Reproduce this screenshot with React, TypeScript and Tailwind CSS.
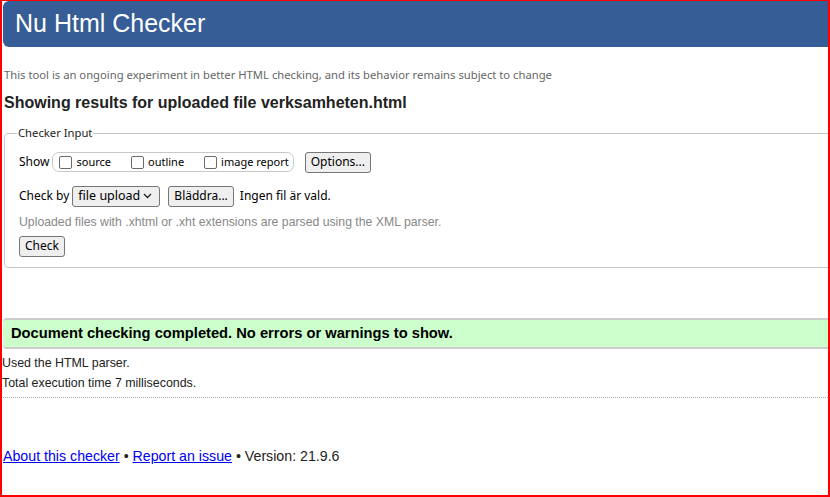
import React from 'react';

const seg = { fontFamily: '"Noto Sans", "Open Sans", sans-serif' };

function Box() {
  return <span className="inline-block h-[13px] w-[13px] rounded-[2px] border border-[#6b6b6b] bg-white" />;
}

function Btn({ children }: { children: React.ReactNode }) {
  return (
    <span className="inline-flex h-[21px] items-center rounded-[3px] border border-[#767676] bg-[#efefef] px-[5px] text-[12px] text-black">
      {children}
    </span>
  );
}

export default function App() {
  return (
    <div
      className="h-[497px] w-[830px] overflow-hidden border-b-2 border-l-2 border-r-2 border-t border-[#ff0000] bg-white text-black"
      style={{ fontFamily: '"Liberation Sans", Arial, sans-serif' }}
    >
      {/* header */}
      <div className="ml-px flex h-[46px] items-center rounded-l-[6px] bg-[#365d95] pl-[12px] text-[25px] text-white">
        Nu Html Checker
      </div>

      <p className="mt-[20px] pl-[2px] text-[11.25px] leading-[16px] text-[#666]" style={seg}>
        This tool is an ongoing experiment in better HTML checking, and its behavior remains subject to change
      </p>

      <h2 className="mt-[10px] pl-[2px] text-[16px] font-bold leading-[20px] text-[#222]">
        Showing results for uploaded file verksamheten.html
      </h2>

      {/* fieldset */}
      <fieldset className="mr-[-10px] ml-[2px] mt-[12px] rounded-[4px] border border-[#c8c8c8] px-[14px] pb-[10px]">
        <legend className="ml-[-2px] px-[1px] text-[11.25px] text-[#222]" style={seg}>
          Checker Input
        </legend>

        <div className="mt-[10px] flex items-center text-[12px]" style={seg}>
          <span>Show</span>
          <span className="ml-[3px] flex h-[20px] items-center rounded-[7px] border border-[#c8c8c8] pl-[6px] pr-[4px] text-[11px]">
            <Box />
            <span className="ml-[4px]">source</span>
            <span className="ml-[20px] flex"><Box /></span>
            <span className="ml-[4px]">outline</span>
            <span className="ml-[20px] flex"><Box /></span>
            <span className="ml-[4px]">image report</span>
          </span>
          <span className="ml-[11px] flex">
            <Btn>Options...</Btn>
          </span>
        </div>

        <div className="mt-[13px] flex items-center text-[12px]" style={seg}>
          <span>Check by</span>
          <span className="ml-[3px] inline-flex h-[21px] w-[88px] items-center justify-between rounded-[3px] border border-[#767676] bg-[#efefef] pl-[5px] pr-[7px] text-[12.5px]">
            <span>file upload</span>
            <svg width="9" height="6" viewBox="0 0 9 6" fill="none">
              <path d="M1 1l3.5 3.5L8 1" stroke="#222" strokeWidth="1.3" />
            </svg>
          </span>
          <span className="ml-[8px] flex">
            <Btn>Bläddra...</Btn>
          </span>
          <span className="ml-[6px]">Ingen fil är vald.</span>
        </div>

        <p className="mt-[7px] text-[12.25px] leading-[16px] text-[#888]">
          Uploaded files with .xhtml or .xht extensions are parsed using the XML parser.
        </p>

        <div className="mt-[6px] flex" style={seg}>
          <Btn>Check</Btn>
        </div>
      </fieldset>

      {/* result */}
      <div className="ml-px mt-[50px] flex h-[31px] items-center rounded-l-[4px] border-b-2 border-t-2 border-[#cccccc] bg-[#ccffcc] pl-[8px] text-[14.7px] font-bold text-black">
        Document checking completed. No errors or warnings to show.
      </div>

      <p className="mt-[4px] text-[12.4px] leading-[20px] text-[#222]">Used the HTML parser.</p>
      <p className="text-[12.4px] leading-[20px] text-[#222]">Total execution time 7 milliseconds.</p>

      <div className="mt-[4px] mr-[-2px] ml-[-2px] border-t border-dotted border-[#aaa]" />

      <p className="mt-[48px] pl-px text-[14.2px] text-[#222]">
        <a className="text-[#0000ee] underline">About this checker</a> •{' '}
        <a className="text-[#0000ee] underline">Report an issue</a> • Version: 21.9.6
      </p>
    </div>
  );
}
